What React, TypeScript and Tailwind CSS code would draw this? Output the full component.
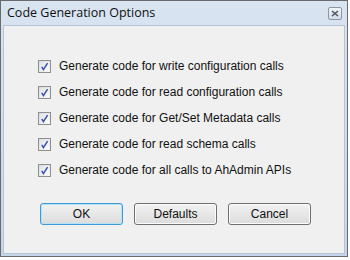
export default function App() {
  const options = [
    "Generate code for write configuration calls",
    "Generate code for read configuration calls",
    "Generate code for Get/Set Metadata calls",
    "Generate code for read schema calls",
    "Generate code for all calls to AhAdmin APIs",
  ];

  return (
    <div className="w-[350px] h-[260px] bg-white">
      {/* Window frame */}
      <div className="w-[348px] h-[257px] border border-[#6a6a6a] bg-gradient-to-b from-[#d9e4f1] to-[#c6d6ea] flex flex-col">
        {/* Title bar */}
        <div className="h-[24px] flex items-center justify-between pl-[6px] pr-[5px] shrink-0">
          <span className="text-[12.5px] text-[#111] font-['Open_Sans',sans-serif] leading-none">
            Code Generation Options
          </span>
          <div className="w-[14px] h-[13px] border border-[#8c97a6] rounded-[2px] bg-gradient-to-b from-[#f1f4f8] to-[#d4dbe5] flex items-center justify-center">
            <svg width="8" height="7" viewBox="0 0 8 7">
              <path d="M1 1 L7 6 M7 1 L1 6" stroke="#4b5563" strokeWidth="1.6" />
            </svg>
          </div>
        </div>

        {/* Content */}
        <div className="flex-1 mx-[2px] mb-[2px] border border-[#b5c4d6] bg-[#f0f0f0] pt-[27px] pl-[34px] font-['Liberation_Sans',sans-serif] text-[12px] text-[#111]">
          <div className="flex flex-col">
            {options.map((o) => (
              <div key={o} className="h-[26px] flex items-center gap-[8px]">
                <div className="w-[13px] h-[13px] border border-[#8f8f8f] bg-gradient-to-br from-[#d8dce2] to-[#f7f7f7] p-[1px]">
                  <div className="w-full h-full bg-gradient-to-br from-[#e1e4e9] to-[#fbfbfb] flex items-center justify-center">
                    <svg width="9" height="9" viewBox="0 0 9 9">
                      <path d="M1.8 4.8 L3.4 7.6 L7.6 1.2" fill="none" stroke="#3a52a6" strokeWidth="1.5" />
                    </svg>
                  </div>
                </div>
                <span>{o}</span>
              </div>
            ))}
          </div>

          {/* Buttons */}
          <div className="flex gap-[11px] mt-[20px] ml-[2px]">
            <button className="w-[83px] h-[22px] rounded-[3px] border border-[#3c9ad8] bg-gradient-to-b from-[#f2f2f2] to-[#dcdcdc] shadow-[inset_0_0_0_1px_#b6e2f8] text-[12px]">
              OK
            </button>
            <button className="w-[83px] h-[22px] rounded-[3px] border border-[#707070] bg-gradient-to-b from-[#f2f2f2] to-[#dcdcdc] shadow-[inset_0_0_0_1px_#fcfcfc] text-[12px]">
              Defaults
            </button>
            <button className="w-[83px] h-[22px] rounded-[3px] border border-[#707070] bg-gradient-to-b from-[#f2f2f2] to-[#dcdcdc] shadow-[inset_0_0_0_1px_#fcfcfc] text-[12px]">
              Cancel
            </button>
          </div>
        </div>
      </div>
    </div>
  );
}
